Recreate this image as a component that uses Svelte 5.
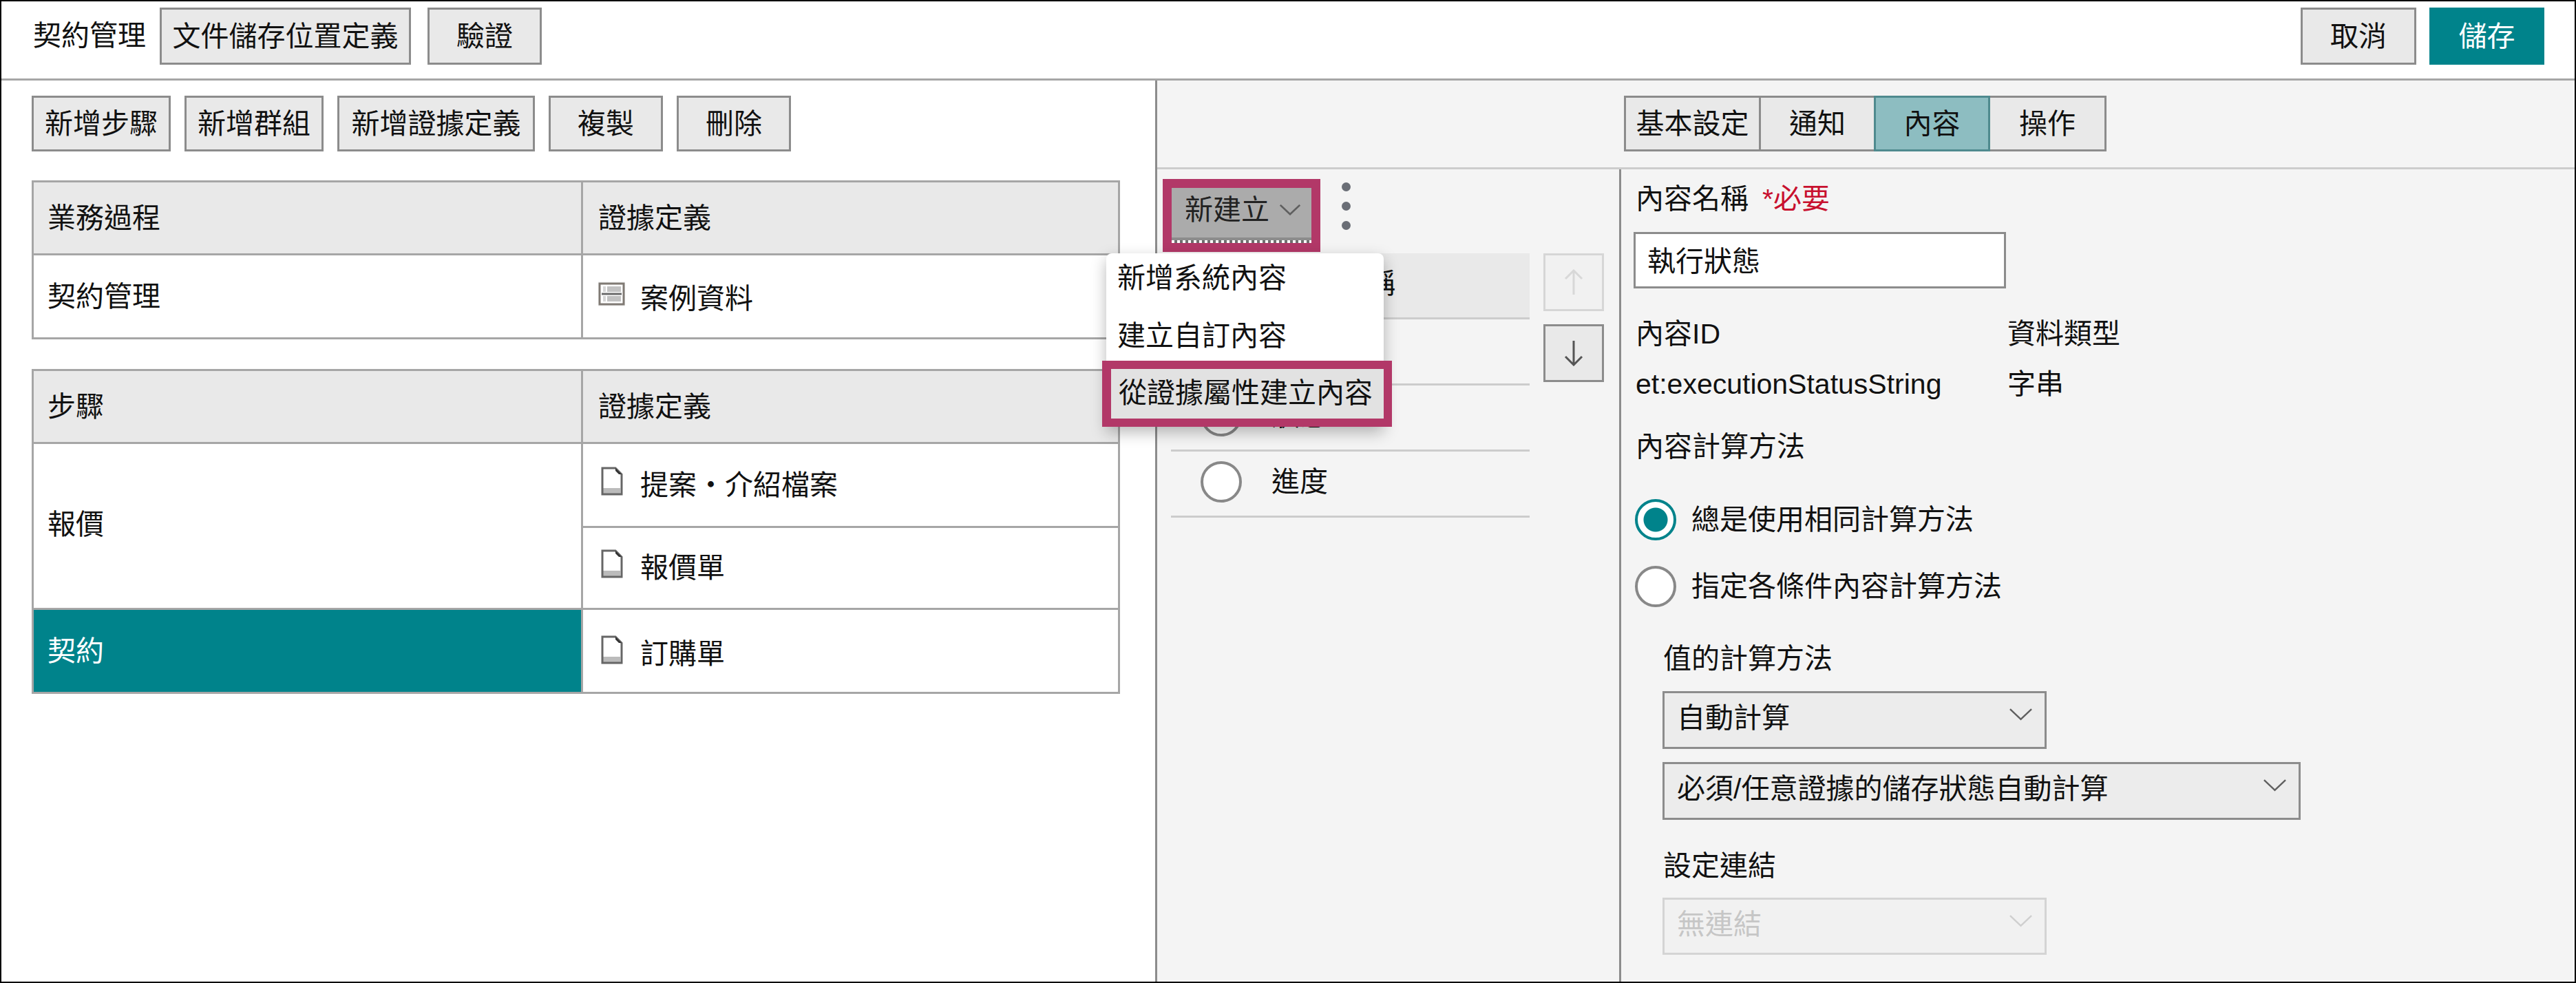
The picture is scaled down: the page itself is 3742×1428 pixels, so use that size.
<script>
  const tools = ["新增步驟", "新增群組", "新增證據定義", "複製", "刪除"];
  const toolWidths = [202, 202, 287, 166, 166];
  const tabs = [
    { label: "基本設定", w: 199 },
    { label: "通知", w: 170 },
    { label: "內容", w: 169, active: true },
    { label: "操作", w: 172 }
  ];
  // second row sits fully behind the open menu
  const rows = ["內容名稱", "", "狀態", "進度"];
</script>

{#snippet chevron()}
  <svg class="chev" viewBox="0 0 36 18"><polyline points="2,1 18,16 34,1" /></svg>
{/snippet}

{#snippet docIcon()}
  <svg class="doc" viewBox="0 0 33 42">
    <rect x="4" y="31" width="25" height="8" fill="#bbb" />
    <path d="M3 2h19l9 9v29H3z" fill="none" stroke="#666" stroke-width="3" />
    <path d="M22 2l9 9h-4l-5-5z" fill="#333" />
  </svg>
{/snippet}

<div class="frame" lang="zh-Hant">
  <header class="top">
    <span class="title">契約管理</span>
    <button class="btn storage">文件儲存位置定義</button>
    <button class="btn verify">驗證</button>
    <button class="btn cancel">取消</button>
    <button class="btn save">儲存</button>
  </header>

  <div class="body">
    <section class="left">
      <div class="tools">
        {#each tools as t, i}
          <button class="btn tool" style="width:{toolWidths[i]}px">{t}</button>
        {/each}
      </div>

      <div class="grid first">
        <div class="cell head">業務過程</div>
        <div class="cell head">證據定義</div>
        <div class="cell">契約管理</div>
        <div class="cell ev case-row">
          <svg class="case" viewBox="0 0 39 36">
            <rect x="0" y="0" width="39" height="36" fill="#f3f3f3" />
            <rect x="3" y="3" width="33" height="30" fill="#fff" />
            <rect x="13" y="7" width="20" height="8" fill="#c2c2c2" />
            <rect x="13" y="21" width="20" height="8" fill="#c2c2c2" />
            <rect x="7" y="7" width="4" height="8" fill="#d6d6d6" />
            <rect x="7" y="21" width="4" height="8" fill="#d6d6d6" />
            <path d="M5 18h29" stroke="#6a6a6a" stroke-width="3" />
            <rect x="2" y="3" width="35" height="30" fill="none" stroke="#807a74" stroke-width="3" />
          </svg>
          <span>案例資料</span>
        </div>
      </div>

      <div class="grid second">
        <div class="cell head">步驟</div>
        <div class="cell head">證據定義</div>
        <div class="cell span">報價</div>
        <div class="cell ev">{@render docIcon()}<span>提案・介紹檔案</span></div>
        <div class="cell mid-row ev">{@render docIcon()}<span>報價單</span></div>
        <div class="cell picked">契約</div>
        <div class="cell ev low">{@render docIcon()}<span>訂購單</span></div>
      </div>
    </section>

    <section class="right">
      <div class="tabbar">
        <div class="tabs">
          {#each tabs as tab}
            <button class="tab" class:active={tab.active} style="width:{tab.w}px">{tab.label}</button>
          {/each}
        </div>
      </div>

      <div class="panes">
        <div class="middle">
          <div class="create">
            <div class="mark">
              <button class="new">新建立 {@render chevron()}</button>
            </div>
            <div class="dots"><i></i><i></i><i></i></div>
          </div>

          <div class="listing">
            <ul class="list">
              {#each rows as row, i}
                <li class:sel={i === 0}>
                  <span class="radio"></span>
                  <span class="name">{row}</span>
                </li>
              {/each}
            </ul>
            <div class="moves">
              <button class="move off" aria-label="up">
                <svg viewBox="0 0 28 38"><path d="M14 37V2M2 14L14 2l12 12" /></svg>
              </button>
              <button class="move" aria-label="down">
                <svg viewBox="0 0 28 38"><path d="M14 1v35M2 24l12 12 12-12" /></svg>
              </button>
            </div>
          </div>

          <div class="menu">
            <div class="item one">新增系統內容</div>
            <div class="item two">建立自訂內容</div>
            <div class="item hot">從證據屬性建立內容</div>
          </div>
        </div>

        <div class="form">
          <div class="lbl name-lbl">內容名稱<em>*必要</em></div>
          <input class="field" type="text" value="執行狀態" />

          <div class="meta">
            <div class="lbl">內容ID</div>
            <div class="lbl">資料類型</div>
            <div class="lbl">et:executionStatusString</div>
            <div class="lbl">字串</div>
          </div>

          <div class="lbl method">內容計算方法</div>

          <div class="opts">
            <div class="opt"><span class="radio on"></span>總是使用相同計算方法</div>
            <div class="opt"><span class="radio"></span>指定各條件內容計算方法</div>
          </div>

          <div class="sub">
            <div class="lbl calc">值的計算方法</div>
            <div class="select short">自動計算 {@render chevron()}</div>
            <div class="select long">必須/任意證據的儲存狀態自動計算 {@render chevron()}</div>
            <div class="lbl link">設定連結</div>
            <div class="select short dim">無連結 {@render chevron()}</div>
          </div>
        </div>
      </div>
    </section>
  </div>
</div>

<style>
  :global(body) {
    margin: 0;
    background: #fff;
  }

  .frame {
    width: 3742px;
    height: 1428px;
    box-sizing: border-box;
    border: 2px solid #000;
    display: flex;
    flex-direction: column;
    overflow: hidden;
    background: #fff;
    color: #111;
    font-family: "Liberation Sans", "Noto Sans CJK TC", sans-serif;
    font-size: 41px;
    line-height: 48px;
  }

  button {
    font: inherit;
    color: inherit;
    padding: 0;
  }

  .btn {
    box-sizing: border-box;
    height: 83px;
    border: 3px solid #8c8c8c;
    background: #e9e9e9;
    white-space: nowrap;
  }

  .top {
    box-sizing: border-box;
    height: 115px;
    flex: none;
    display: flex;
    align-items: flex-start;
    padding: 9px 44px 0 46px;
    border-bottom: 3px solid #a6a6a6;
  }

  .title {
    width: 164px;
    margin-right: 20px;
    line-height: 83px;
  }

  .storage { width: 365px; margin-right: 24px; }
  .verify { width: 166px; }
  .cancel { width: 168px; margin-left: auto; margin-right: 19px; }
  .save {
    width: 167px;
    border-color: #00838b;
    background: #00838b;
    color: #fff;
  }

  .body {
    flex: 1;
    display: flex;
    min-height: 0;
  }

  .left {
    box-sizing: border-box;
    width: 1679px;
    flex: none;
    padding: 22px 0 0 44px;
    border-right: 3px solid #8c8c8c;
  }

  .tools {
    display: flex;
    gap: 20px;
  }

  .tool { height: 81px; }

  .grid {
    width: 1581px;
    box-sizing: border-box;
    display: grid;
    grid-template-columns: 795px 777px;
    gap: 3px;
    padding: 3px;
    background: #a6a6a6;
  }

  .first { margin-top: 42px; }
  .second { margin-top: 43px; }

  .cell {
    box-sizing: border-box;
    display: flex;
    align-items: center;
    padding-left: 20px;
    height: 119px;
    background: #fff;
    white-space: nowrap;
  }

  .head {
    height: 103px;
    background: #e9e9e9;
  }

  .head:nth-child(2),
  .ev { padding-left: 22px; }

  .mid-row { height: 116px; }
  .case-row { padding-top: 6px; }
  .low { padding-top: 8px; }

  .span {
    grid-row: span 2;
    height: auto;
    padding-bottom: 4px;
  }

  .picked {
    background: #00838b;
    color: #fff;
  }

  .ev span { margin-left: 22px; }

  .case {
    width: 39px;
    height: 36px;
    margin-bottom: 14px;
    flex: none;
  }

  .doc {
    width: 33px;
    height: 42px;
    margin: 0 3px 12px 3px;
    flex: none;
  }

  .right {
    flex: 1;
    min-width: 0;
    display: flex;
    flex-direction: column;
    background: #f4f4f4;
  }

  .tabbar {
    box-sizing: border-box;
    height: 129px;
    flex: none;
    padding-top: 22px;
    display: flex;
    justify-content: center;
    border-bottom: 3px solid #ccc;
  }

  .tabs {
    display: flex;
    height: 81px;
    margin-left: -2px;
  }

  .tab {
    box-sizing: border-box;
    border: 3px solid #8c8c8c;
    background: #e9e9e9;
    margin-left: -3px;
  }

  .tab:first-child { margin-left: 0; }

  .tab.active {
    background: #8dbdc1;
    border-color: #4f8a8e;
    position: relative;
    z-index: 1;
  }

  .panes {
    flex: 1;
    display: flex;
    min-height: 0;
  }

  .middle {
    position: relative;
    box-sizing: border-box;
    width: 674px;
    flex: none;
    border-right: 3px solid #8c8c8c;
    padding: 14px 0 0 8px;
  }

  .create {
    display: flex;
    align-items: flex-start;
  }

  .mark {
    border: 13px solid #b23868;
    flex: none;
  }

  .new {
    position: relative;
    box-sizing: border-box;
    width: 203px;
    height: 80px;
    border: 0;
    background: #ababab;
    color: #222;
    display: flex;
    align-items: center;
    gap: 14px;
    padding: 0 0 16px 19px;
    white-space: nowrap;
  }

  .new::after {
    content: "";
    position: absolute;
    left: 0;
    right: 0;
    bottom: 0;
    height: 8px;
    background:
      repeating-linear-gradient(90deg, #fff 0 4px, #6f6f6f 4px 8px) bottom / 100% 4px no-repeat,
      #8c8c8c;
  }

  .chev {
    width: 32px;
    height: 16px;
    flex: none;
    fill: none;
    stroke: #5f5f5f;
    stroke-width: 3px;
  }

  .dots {
    display: flex;
    flex-direction: column;
    gap: 15px;
    margin: 5px 0 0 31px;
  }

  .dots i {
    display: block;
    width: 13px;
    height: 13px;
    border-radius: 50%;
    background: #6a6e76;
  }

  .listing {
    display: flex;
    gap: 20px;
    margin: 2px 0 0 12px;
  }

  .list {
    list-style: none;
    margin: 0;
    padding: 0;
    width: 521px;
  }

  .list li {
    box-sizing: border-box;
    height: 96px;
    display: flex;
    align-items: center;
    padding: 0 0 6px 43px;
    border-bottom: 3px solid #ccc;
    gap: 43px;
  }

  .list li.sel { background: #e9e9e9; }
  .list li.sel .name { margin-left: 16px; }

  .radio {
    box-sizing: border-box;
    display: block;
    width: 60px;
    height: 60px;
    flex: none;
    border: 4px solid #888;
    border-radius: 50%;
    background: #fff;
  }

  .radio.on {
    border-color: #00838b;
    background: radial-gradient(circle, #00838b 0 17px, #fff 18px);
  }

  .moves {
    display: flex;
    flex-direction: column;
    gap: 19px;
  }

  .move {
    box-sizing: border-box;
    width: 88px;
    height: 84px;
    border: 3px solid #8c8c8c;
    background: #e9e9e9;
    display: flex;
    align-items: center;
    justify-content: center;
  }

  .move svg {
    width: 28px;
    height: 38px;
    fill: none;
    stroke: #555;
    stroke-width: 3px;
  }

  .move.off {
    border-color: #d6d6d6;
    background: #f1f1f1;
  }

  .move.off svg { stroke: #d8d8d8; }

  .menu {
    position: absolute;
    z-index: 5;
    left: -74px;
    top: 122px;
    width: 403px;
    background: #fff;
    border-radius: 8px 8px 0 0;
    box-shadow: 0 8px 22px rgba(0, 0, 0, 0.28);
    color: #111;
    white-space: nowrap;
  }

  .item { padding-left: 16px; }
  .one { line-height: 72px; }
  .two { line-height: 84px; margin-top: 6px; }

  .hot {
    box-sizing: border-box;
    margin: -6px -12px 0 -6px;
    height: 96px;
    border: 12px solid #b23868;
    border-left-width: 13px;
    background: #e2e2e2;
    padding-left: 11px;
    line-height: 70px;
  }

  .form {
    flex: 1;
    min-width: 0;
    padding: 19px 0 0 21px;
  }

  .lbl { white-space: nowrap; }

  .name-lbl em {
    font-style: normal;
    color: #c8102e;
    margin-left: 20px;
  }

  .field {
    display: block;
    box-sizing: border-box;
    width: 541px;
    height: 82px;
    margin: 24px 0 0 -3px;
    padding: 0 0 4px 17px;
    border: 3px solid #8c8c8c;
    background: #fff;
    font: inherit;
    color: inherit;
    outline: none;
    border-radius: 0;
  }

  .meta {
    display: grid;
    grid-template-columns: 540px auto;
    justify-content: start;
    row-gap: 25px;
    margin-top: 42px;
  }

  .method { margin-top: 43px; }

  .opts {
    display: flex;
    flex-direction: column;
    gap: 37px;
    margin: 52px 0 0 -1px;
  }

  .opt {
    display: flex;
    align-items: center;
    gap: 22px;
    height: 60px;
    white-space: nowrap;
  }

  .sub {
    padding-left: 40px;
  }

  .calc { margin-top: 51px; }

  .select {
    box-sizing: border-box;
    height: 84px;
    margin-left: -1px;
    border: 3px solid #8c8c8c;
    background: #ececec;
    display: flex;
    align-items: center;
    justify-content: space-between;
    padding: 0 17px 6px 18px;
    white-space: nowrap;
  }

  .select .chev {
    width: 35px;
    height: 18px;
    stroke-width: 2.5px;
    margin-bottom: 10px;
  }

  .short { width: 558px; margin-top: 23px; }
  .long { width: 927px; margin-top: 19px; }
  .link { margin-top: 43px; }

  .dim {
    margin-top: 22px;
    height: 83px;
    border-color: #d4d4d4;
    background: #f1f1f1;
    color: #c6c6c6;
  }

  .dim .chev { stroke: #cfcfcf; }
</style>
